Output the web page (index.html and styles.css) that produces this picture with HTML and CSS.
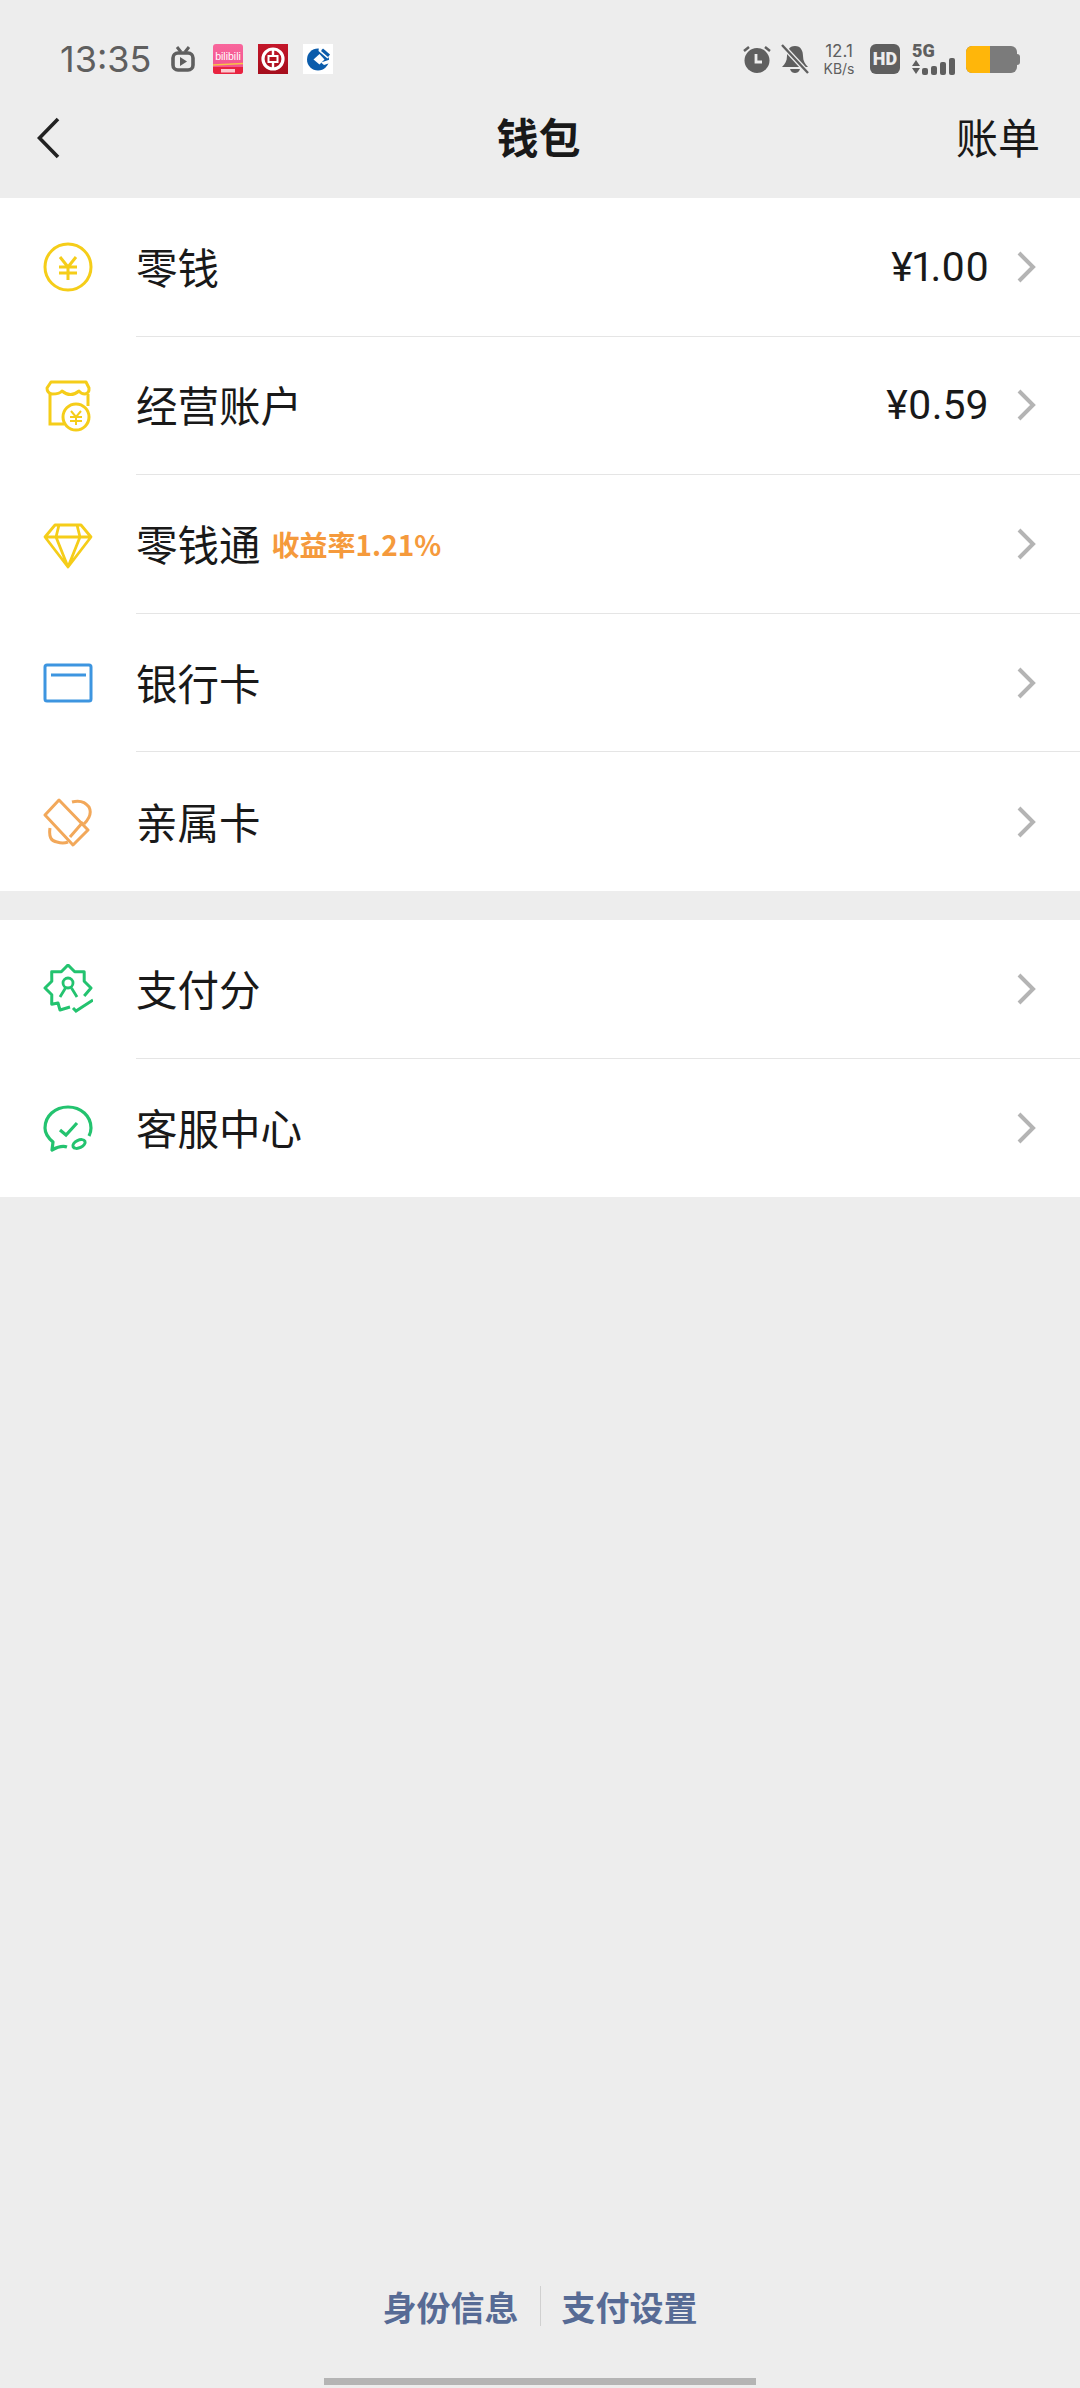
FILE: index.html
```html
<!DOCTYPE html>
<html lang="zh">
<head>
  <meta charset="utf-8">
  <meta name="viewport" content="width=device-width, initial-scale=1">
  <title>钱包</title>
  <link rel="stylesheet" href="styles.css">
</head>
<body>
  <div class="page">
    <!-- status bar -->
    <div class="status">
      <div class="status-left">
        <span class="time">13:35</span>
        <svg class="ico-tv" width="24" height="26" viewBox="0 0 24 26"><path d="M6 1l4 5M18 1l-4 5" stroke="#5f5f5f" stroke-width="3" fill="none"/><rect x="2" y="7" width="20" height="17" rx="5" fill="none" stroke="#5f5f5f" stroke-width="3.600"/><path d="M9 11l7 4.500-7 4.500z" fill="#5f5f5f"/></svg>
        <svg class="ico-app" width="30" height="30" viewBox="0 0 30 30"><defs><linearGradient id="pink" x1="0" y1="0" x2="0" y2="1"><stop offset="0" stop-color="#f8669c"/><stop offset="1" stop-color="#f2508c"/></linearGradient><linearGradient id="boc" x1="0" y1="0" x2="0" y2="1"><stop offset="0" stop-color="#c4162a"/><stop offset="1" stop-color="#a50d1c"/></linearGradient></defs><rect width="30" height="30" rx="3" fill="url(#pink)"/><text class="bili" x="15" y="16" text-anchor="middle">bilibili</text><path d="M0 21l30-1.500" stroke="#f6c445" stroke-width="1.500"/><path d="M0 23h30v4a3 3 0 0 1-3 3H3a3 3 0 0 1-3-3z" fill="#e8233f"/><rect x="8" y="25" width="14" height="3.500" fill="#fbc9cf"/></svg>
        <svg class="ico-app" width="30" height="30" viewBox="0 0 30 30"><rect width="30" height="30" fill="url(#boc)"/><circle cx="15" cy="15" r="10" fill="none" stroke="#fff" stroke-width="3.200"/><path d="M15 4v22" stroke="#fff" stroke-width="2.400"/><rect x="10.500" y="12" width="9" height="6" fill="#b3111f" stroke="#fff" stroke-width="2"/></svg>
        <svg class="ico-app" width="30" height="30" viewBox="0 0 30 30"><rect width="30" height="30" fill="#fff"/><circle cx="15" cy="15.500" r="11" fill="#0b5cab"/><path d="M10.500 15.500l6-5.500 5 5.500-5 5z" fill="#fff"/><path d="M18 18.500l9-3v3.500l-6 2z" fill="#fff"/><path d="M16 3l11 9-2.500 2.500-9-7.500z" fill="#fff"/><path d="M20 4.500l7 6-2 2.500-7-6z" fill="#0b5cab"/></svg>
      </div>
      <div class="status-right">
        <svg width="30" height="30" viewBox="0 0 30 30"><circle cx="15" cy="16.500" r="12.500" fill="#5f5f5f"/><path d="M2 7l5-4M28 7l-5-4" stroke="#5f5f5f" stroke-width="2.500"/><path d="M14 10v8h6" fill="none" stroke="#ededed" stroke-width="2.800"/></svg>
        <svg width="28" height="30" viewBox="0 0 28 30"><path d="M14 2c-6 0-8 5-8 10 0 5-2 8-5 11h26c-3-3-5-6-5-11 0-5-2-10-8-10z M9 25c1 3 3 4 5 4s4-1 5-4z" fill="#5f5f5f"/><path d="M1 1l26 28" stroke="#ededed" stroke-width="5"/><path d="M1 1l26 28" stroke="#5f5f5f" stroke-width="2.400"/></svg>
        <div class="speed"><span>12.1</span><span class="speed-unit">KB/s</span></div>
        <div class="hd">HD</div>
        <div class="signal">
          <span class="five-g">5G</span>
          <svg class="signal-arrows" width="44" height="17" viewBox="0 0 44 17"><path d="M0 8l4-6 4 6zM0 10h8l-4 6z" fill="#5f5f5f"/><rect x="10" y="10" width="6" height="7" rx="2" fill="#5f5f5f"/><rect x="19" y="8" width="6" height="9" rx="2" fill="#5f5f5f"/><rect x="28" y="4" width="6" height="13" rx="2" fill="#5f5f5f"/><rect x="37" y="0" width="6" height="17" rx="2" fill="#5f5f5f"/></svg>
        </div>
        <div class="battery"><div class="battery-body"><div class="battery-level"></div></div><div class="battery-cap"></div></div>
      </div>
    </div>

    <!-- nav -->
    <div class="nav">
      <svg class="nav-back" width="24" height="42" viewBox="0 0 24 42"><path d="M21 2L2.500 21 21 40" fill="none" stroke="#222" stroke-width="3.600"/></svg>
      <div class="nav-title">钱包</div>
      <div class="nav-right">账单</div>
    </div>

    <!-- first group -->
    <div class="group">
      <div class="row">
        <svg class="row-icon" width="50" height="50" viewBox="0 0 50 50"><circle cx="25" cy="25" r="23" fill="none" stroke="#f5cd19" stroke-width="3"/><path d="M17 15l8 10 8-10M16 25h18M16 31h18M25 25v13" fill="none" stroke="#f5cd19" stroke-width="3"/></svg>
        <div class="row-body"><span class="row-name">零钱</span><span class="row-value">¥1.00</span><svg class="chevron" width="20" height="32" viewBox="0 0 20 32"><path d="M2 2l14 14L2 30" fill="none" stroke="#b4b4b4" stroke-width="4"/></svg></div>
      </div>
      <div class="row">
        <svg class="row-icon" width="50" height="52" viewBox="0 0 50 52"><path d="M7 14v30h14M45 14v12" fill="none" stroke="#f5cd19" stroke-width="3"/><path d="M8 2H43L46 8Q46.500 13 42 14Q38 14 36 11Q27.500 18 19 11Q17 14 9 14Q4 13 4 8Z" fill="none" stroke="#f5cd19" stroke-width="3" stroke-linejoin="round"/><circle cx="33" cy="37" r="13" fill="#fff" stroke="#f5cd19" stroke-width="3"/><path d="M28 31l5 6 5-6M27 37h12M27 41h12M33 37v8" fill="none" stroke="#f5cd19" stroke-width="2"/></svg>
        <div class="row-body"><span class="row-name">经营账户</span><span class="row-value">¥0.59</span><svg class="chevron" width="20" height="32" viewBox="0 0 20 32"><path d="M2 2l14 14L2 30" fill="none" stroke="#b4b4b4" stroke-width="4"/></svg></div>
      </div>
      <div class="row">
        <svg class="row-icon" width="50" height="50" viewBox="0 0 50 50"><path d="M12 6h26l10 12-23 30L2 18zM2 18h46M16 6l-3 12 12 30 12-30-3-12" fill="none" stroke="#f5cd19" stroke-width="2.800" stroke-linejoin="round"/></svg>
        <div class="row-body"><span class="row-name">零钱通</span><span class="row-tag">收益率1.21%</span><span class="spacer"></span><svg class="chevron" width="20" height="32" viewBox="0 0 20 32"><path d="M2 2l14 14L2 30" fill="none" stroke="#b4b4b4" stroke-width="4"/></svg></div>
      </div>
      <div class="row">
        <svg class="row-icon" width="50" height="40" viewBox="0 0 50 40"><rect x="2" y="2" width="46" height="36" rx="2" fill="none" stroke="#3d95e0" stroke-width="3"/><path d="M8 12h35" stroke="#3d95e0" stroke-width="3"/></svg>
        <div class="row-body"><span class="row-name">银行卡</span><span class="spacer"></span><svg class="chevron" width="20" height="32" viewBox="0 0 20 32"><path d="M2 2l14 14L2 30" fill="none" stroke="#b4b4b4" stroke-width="4"/></svg></div>
      </div>
      <div class="row">
        <svg class="row-icon" width="50" height="50" viewBox="0 0 50 50"><path d="M16 3L2 18l28 30 15-15z" fill="none" stroke="#f2a85a" stroke-width="3" stroke-linejoin="round"/><path d="M40 25L27 40M29 5Q40 2 46 10Q50 18 41 27M7 31Q5 44 14 45Q20 47 25 45" fill="none" stroke="#f2a85a" stroke-width="3"/></svg>
        <div class="row-body last"><span class="row-name">亲属卡</span><span class="spacer"></span><svg class="chevron" width="20" height="32" viewBox="0 0 20 32"><path d="M2 2l14 14L2 30" fill="none" stroke="#b4b4b4" stroke-width="4"/></svg></div>
      </div>
    </div>

    <!-- second group -->
    <div class="group">
      <div class="row">
        <svg class="row-icon" width="50" height="50" viewBox="0 0 50 50"><path d="M41.200 32L48 24l-6.800-6.700-.0-9.600-9.500.1L25 1l-6.700 6.800-9.600-.1.1 9.600L2 24l6.800 6.700-.1 9.600 6.300-1.300 2 7L27 43" fill="none" stroke="#23c36f" stroke-width="3" stroke-linejoin="round"/><circle cx="25" cy="19" r="5" fill="none" stroke="#23c36f" stroke-width="2.800"/><path d="M17 33l5.500-9M34 33l-5.500-9" fill="none" stroke="#23c36f" stroke-width="2.800"/><path d="M30 44l3 3 17-11" fill="none" stroke="#23c36f" stroke-width="3"/></svg>
        <div class="row-body"><span class="row-name">支付分</span><span class="spacer"></span><svg class="chevron" width="20" height="32" viewBox="0 0 20 32"><path d="M2 2l14 14L2 30" fill="none" stroke="#b4b4b4" stroke-width="4"/></svg></div>
      </div>
      <div class="row">
        <svg class="row-icon" width="50" height="48" viewBox="0 0 50 48"><path d="M24 43Q18 41 9 46L10 38C4 33 2 28 2 24 2 12 12 3 25 3S48 12 48 24C48 27 47 30 46 32" fill="none" stroke="#23c36f" stroke-width="3.200" stroke-linejoin="round"/><path d="M17 26l6 5 11-12" fill="none" stroke="#23c36f" stroke-width="3.200"/><ellipse cx="36" cy="40" rx="6.500" ry="3.800" transform="rotate(-25 36 40)" fill="none" stroke="#23c36f" stroke-width="3"/></svg>
        <div class="row-body last"><span class="row-name">客服中心</span><span class="spacer"></span><svg class="chevron" width="20" height="32" viewBox="0 0 20 32"><path d="M2 2l14 14L2 30" fill="none" stroke="#b4b4b4" stroke-width="4"/></svg></div>
      </div>
    </div>

    <!-- footer links -->
    <div class="footer">
      <span class="footer-link">身份信息</span>
      <span class="footer-sep"></span>
      <span class="footer-link">支付设置</span>
    </div>
    <div class="home-bar"></div>
  </div>
</body>
</html>
```

FILE: styles.css
```css
* {
  box-sizing: border-box;
}
html, body {
  margin: 0;
  padding: 0;
}
body {
  background: #ededed;
  color: #191919;
  font-family: "Noto Sans CJK SC", "Noto Sans", sans-serif;
}
.page {
  width: 1080px;
  height: 2388px;
  display: flex;
  flex-direction: column;
  overflow: hidden;
}

/* status bar */
.status {
  height: 78px;
  padding: 40px 60px 0 60px;
  display: flex;
  justify-content: space-between;
  align-items: flex-start;
  color: #5f5f5f;
}
.status-left, .status-right {
  display: flex;
  align-items: center;
  height: 38px;
}
.time {
  font-family: Inter, Roboto, sans-serif;
  font-size: 36px;
  line-height: 38px;
  width: 111px;
  white-space: nowrap;
}
.ico-tv {
  margin-right: 18px;
}
.ico-app {
  margin-right: 15px;
}
.bili {
  font-family: "Liberation Sans", sans-serif;
  font-size: 10.500px;
  fill: #fff;
}
.status-right > svg {
  margin-right: 9px;
}
.speed {
  width: 36px;
  margin: 0 13px 0 3px;
  display: flex;
  flex-direction: column;
  align-items: center;
  font-family: Inter, Roboto, sans-serif;
  font-size: 17px;
  line-height: 19px;
}
.speed-unit {
  font-size: 14px;
  line-height: 15px;
  white-space: nowrap;
}
.hd {
  width: 30px;
  height: 30px;
  margin-right: 12px;
  border-radius: 6px;
  background: #5f5f5f;
  color: #ededed;
  font-family: Roboto, sans-serif;
  font-size: 18px;
  font-weight: 900;
  line-height: 30px;
  text-align: center;
}
.signal {
  width: 44px;
  margin-right: 10px;
  display: flex;
  flex-direction: column;
}
.five-g {
  font-family: Roboto, sans-serif;
  font-size: 18px;
  font-weight: 900;
  line-height: 14px;
}
.signal-arrows {
  display: block;
}
.battery {
  display: flex;
  align-items: center;
}
.battery-body {
  width: 51px;
  height: 27px;
  border-radius: 6px;
  background: #7b7b7b;
  overflow: hidden;
}
.battery-level {
  width: 24px;
  height: 100%;
  background: #ffb60a;
}
.battery-cap {
  width: 3px;
  height: 11px;
  border-radius: 0 3px 3px 0;
  background: #7b7b7b;
}

/* nav */
.nav {
  height: 120px;
  padding: 0 40px 5px 37px;
  display: grid;
  grid-template-columns: 1fr auto 1fr;
  align-items: center;
}
.nav-back {
  display: block;
  margin-top: 5px;
}
.nav-title {
  font-size: 42px;
  font-weight: 700;
  color: #191919;
}
.nav-right {
  font-size: 42px;
  text-align: right;
}

/* list */
.group {
  background: #fff;
  margin-bottom: 29px;
}
.row {
  height: 138.600px;
  display: flex;
  align-items: center;
}
.row-icon {
  flex: none;
  margin-left: 43px;
}
.row-body {
  flex: 1;
  height: 100%;
  margin-left: 43px;
  padding-right: 43px;
  display: flex;
  align-items: center;
  border-bottom: 1px solid #e5e5e5;
}
.row-body.last {
  border-bottom: none;
}
.row-name {
  font-size: 41.500px;
  margin-bottom: 2px;
}
.row-tag {
  margin-left: 11px;
  font-size: 28px;
  font-weight: 700;
  color: #f59a3c;
}
.row-value {
  margin-left: auto;
  font-family: Roboto, sans-serif;
  font-size: 41px;
  font-feature-settings: "pnum";
}
.spacer {
  flex: 1;
}
.chevron {
  margin-left: 28px;
}

/* footer */
.footer {
  margin-top: auto;
  display: flex;
  justify-content: center;
  align-items: center;
  height: 40px;
  margin-bottom: 52px;
}
.footer-link {
  font-size: 34px;
  font-weight: 700;
  color: #576b95;
}
.footer-sep {
  width: 1px;
  height: 40px;
  margin: 0 21px;
  background: #d0d0d0;
}
.home-bar {
  width: 432px;
  height: 7px;
  margin: 0 auto 3px auto;
  background: #b4b4b4;
}
```
